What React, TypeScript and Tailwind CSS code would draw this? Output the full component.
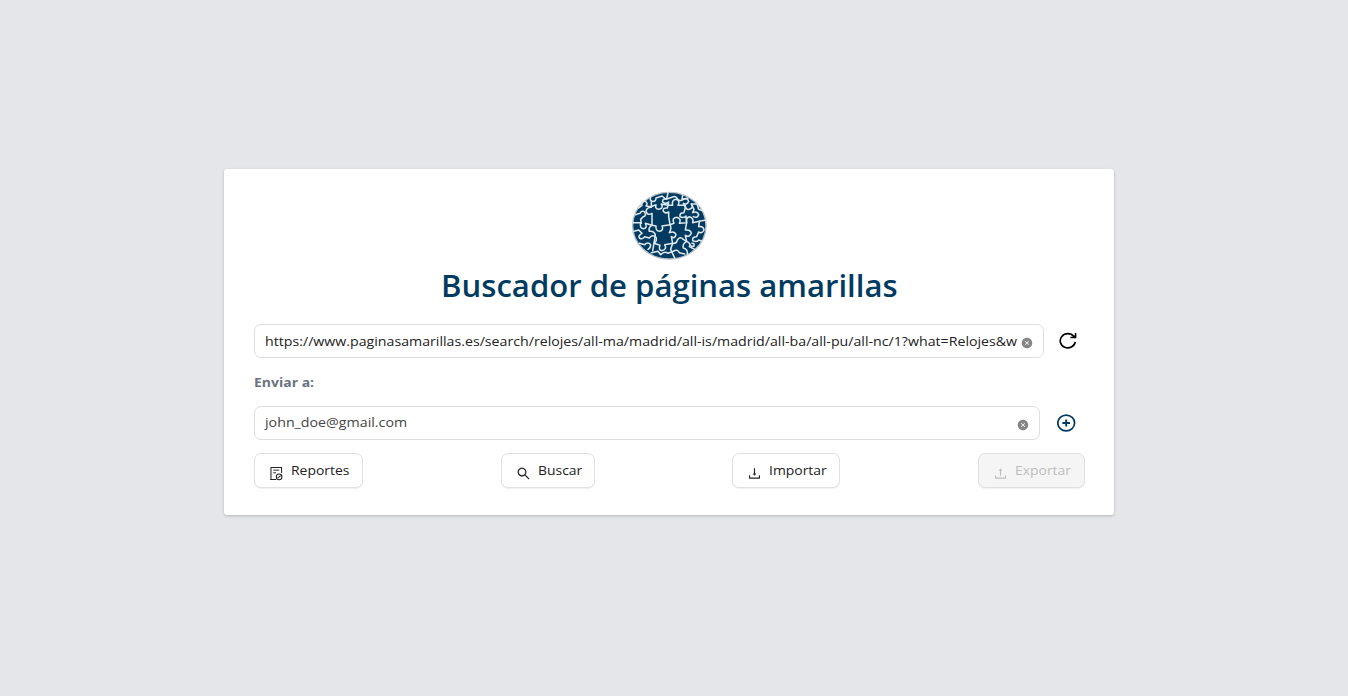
import React from "react";
import { AiOutlineSearch, AiOutlineDownload, AiOutlineUpload, AiFillCloseCircle } from "react-icons/ai";

type ActionProps = {
  icon: React.ReactNode;
  label: string;
  className: string;
  disabled?: boolean;
};

function ActionButton({ icon, label, className, disabled }: ActionProps) {
  return (
    <button
      disabled={disabled}
      className={`flex h-[35px] items-center gap-[7px] whitespace-nowrap rounded-[7px] border border-[#e0e0e0] pl-[14px] text-[13px] shadow-[0_1px_1px_rgba(0,0,0,0.06)] ${className}`}
    >
      <span className="mt-[5px] flex">{icon}</span>
      <span className="origin-left scale-x-[1.07]">{label}</span>
    </button>
  );
}

function ReportIcon() {
  return (
    <svg width="15" height="15" viewBox="0 0 15 16" fill="none" stroke="currentColor" strokeWidth="1.1">
      <path d="M7 14.4H1.6V1.6H12.9V7.5" />
      <path d="M4 4.4H10.5M4 7.2H7" strokeWidth="1" />
      <circle cx="10.3" cy="11.6" r="3" />
      <path d="M8.7 12.9L12 10.2" />
      <path d="M1 14.4H7" />
    </svg>
  );
}

function ReloadIcon() {
  return (
    <svg width="18" height="17" viewBox="0 0 18 17" fill="none" stroke="currentColor" strokeWidth="1.6">
      <path d="M16.3 10A7.6 7.1 0 1 1 14.8 4.4" />
      <path d="M16.6 0.9V5.6H11.4" strokeWidth="1.5" />
      <path d="M16.5 2.4L13 5.6H16.5Z" fill="currentColor" stroke="none" />
    </svg>
  );
}

function AddIcon() {
  return (
    <svg width="19" height="18" viewBox="0 0 19 18" fill="none" stroke="currentColor" strokeWidth="1.7">
      <ellipse cx="9.2" cy="9" rx="8.4" ry="7.8" />
      <path d="M5.4 9H13M9.2 5.4V12.6" strokeWidth="1.9" />
    </svg>
  );
}

function Logo() {
  return (
    <svg width="100" height="84" viewBox="0 0 300 252" className="block">
      <ellipse cx="148" cy="131" rx="110" ry="100" fill="#023b61" stroke="#b4bfc6" strokeWidth="4" />
      <g fill="none" stroke="#dfe9ef" strokeWidth="4.6" strokeLinecap="round" strokeLinejoin="round">
        <path d="M92 44 Q88 54 96 58 Q108 60 108 48 L126 42 L138 52 L160 44 Q168 42 172 50 Q180 60 190 52 L204 48" />
        <path d="M56 78 L66 70 Q62 56 74 58 Q86 62 78 72 L92 74 L108 68 Q104 80 116 82 Q132 80 124 66 L144 70 L158 70 Q154 54 168 52 Q182 56 174 70 L196 70 Q196 84 208 82 Q222 78 214 66 L232 66" />
        <path d="M46 98 L60 94 Q66 84 74 90 Q80 102 70 104 L62 112 L64 124" />
        <path d="M40 122 L62 122 Q58 138 70 140 Q84 138 76 124 L96 130 L108 132 Q106 147 119 148 Q132 144 126 132 L150 128 L162 124 Q154 108 170 106 Q186 110 178 124 L200 122 Q196 108 208 104 Q222 108 218 122 L238 118 L258 114" />
        <path d="M42 148 L56 144 L66 154 Q54 160 58 168 Q68 174 74 164 L88 168 Q98 156 108 166 Q112 178 102 184 L120 190 Q114 204 126 206 Q142 202 134 188 L158 184 Q170 186 172 174 Q180 162 190 172 L200 178 Q214 184 208 194 L224 202" />
        <path d="M58 184 L74 188 Q84 178 92 188 Q92 198 84 202 M94 212 L114 208 L122 218 Q134 206 144 214 L160 208 Q172 200 178 212 L194 216" />
        <path d="M94 60 L94 76 Q80 76 78 88 Q82 102 96 94 L96 130 Q84 136 88 148 Q102 146 106 158 L102 184 L98 206" />
        <path d="M144 33 L140 50 Q126 50 128 60 Q136 68 146 60 L142 78 Q128 76 130 88 Q136 96 146 90 L146 104 L150 128 Q156 140 148 152 Q164 146 168 158 Q164 172 154 164 L158 184 L152 202 L164 228" />
        <path d="M188 39 L186 52 Q202 46 206 58 Q202 70 190 64 L196 76 L192 92 Q178 92 180 104 Q190 110 198 102 L200 122 L196 144 Q212 142 214 154 Q206 168 196 160 L200 178 Q186 186 190 198 Q204 202 202 216" />
        <path d="M214 66 L222 82 L218 92 Q232 86 236 98 Q232 110 220 104 M238 118 L236 134 Q250 132 252 144 Q246 156 236 150 L230 164 Q216 164 218 176 Q230 182 236 174 L246 178" />
        <path d="M232 68 L236 82 L248 86 M216 184 Q224 182 222 192 Q214 196 212 190" />
      </g>
    </svg>
  );
}

export default function App() {
  return (
    <main className="flex h-[696px] w-full justify-center bg-[#e5e6ea] pr-[10px] pt-[169px] font-['Open_Sans','Noto_Sans',sans-serif]">
      <section className="flex h-[346px] w-[890px] flex-col rounded-[3px] bg-white px-[30px] pt-[13px] shadow-[0_1px_3px_rgba(0,0,0,0.22)]">
        <div className="flex h-[84px] justify-center pl-[2px]"><Logo /></div>
        <h1 className="flex h-[40px] items-center justify-center whitespace-nowrap pb-[2px] pl-[1px] text-[30px] font-semibold text-[#023b61]">
          <span className="scale-x-[1.036]">Buscador de páginas amarillas</span>
        </h1>
        <div className="mt-[18px] flex items-center">
          <div className="flex h-[34px] w-[790px] items-center rounded-[7px] border border-[#dedede] px-[10px] text-[13.3px] text-[#222]">
            <span className="w-[753px] whitespace-nowrap pt-[2px]">
              <span className="inline-block origin-left scale-x-[1.066]">https://www.paginasamarillas.es/search/relojes/all-ma/madrid/all-is/madrid/all-ba/all-pu/all-nc/1?what=Relojes&amp;w</span>
            </span>
            <AiFillCloseCircle size={12} className="ml-[3px] mt-[4px] shrink-0 text-[#858585]" />
          </div>
          <span className="ml-[15px] pb-px text-black"><ReloadIcon /></span>
        </div>
        <div className="mt-[14px] h-[20px] text-[13.2px] font-bold leading-[20px] text-[#6b7280]">
          <span className="inline-block origin-left scale-x-[1.06]">Enviar a:</span>
        </div>
        <div className="mt-[14px] flex items-center">
          <div className="flex h-[34px] w-[786px] items-center justify-between rounded-[7px] border border-[#dedede] px-[10px] text-[13.3px] text-[#444]">
            <span className="origin-left scale-x-[1.07]">john_doe@gmail.com</span>
            <AiFillCloseCircle size={12} className="mt-[4px] shrink-0 text-[#858585]" />
          </div>
          <span className="ml-[17px] text-[#023b61]"><AddIcon /></span>
        </div>
        <div className="mt-[13px] flex w-[831px] justify-between">
          <ActionButton className="w-[109px] bg-white text-[#222]" icon={<ReportIcon />} label="Reportes" />
          <ActionButton className="w-[94px] bg-white text-[#222]" icon={<AiOutlineSearch size={15} strokeWidth={10} />} label="Buscar" />
          <ActionButton className="w-[108px] bg-white text-[#222]" icon={<AiOutlineDownload size={15} />} label="Importar" />
          <ActionButton className="w-[107px] bg-[#f5f5f5] text-[#bdbdbd]" icon={<AiOutlineUpload size={15} />} label="Exportar" disabled />
        </div>
      </section>
    </main>
  );
}
